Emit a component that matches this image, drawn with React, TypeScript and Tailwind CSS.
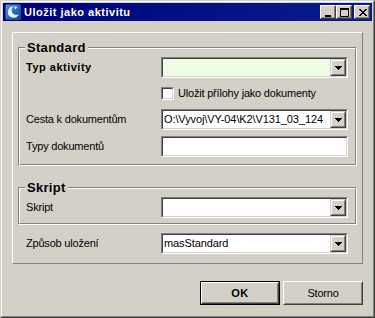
import React from "react";

function Arrow() {
  return (
    <svg width="7" height="4" viewBox="0 0 7 4" shapeRendering="crispEdges">
      <path d="M0 0h7v1h-7z M1 1h5v1h-5z M2 2h3v1h-3z M3 3h1v1h-1z" fill="#000" />
    </svg>
  );
}

function ArrowBtn() {
  return (
    <div className="w-[16px] h-full border border-t-[#d4d0c8] border-l-[#d4d0c8] border-r-[#404040] border-b-[#404040] bg-[#d4d0c8]">
      <div className="w-full h-full border border-t-white border-l-white border-r-[#808080] border-b-[#808080] flex items-center justify-center">
        <Arrow />
      </div>
    </div>
  );
}

function Sunken({ className, children }: { className: string; children?: React.ReactNode }) {
  return (
    <div className={`border border-t-[#808080] border-l-[#808080] border-r-white border-b-white ${className}`}>
      <div className="w-full h-full border border-t-[#404040] border-l-[#404040] border-r-[#d4d0c8] border-b-[#d4d0c8] flex">
        {children}
      </div>
    </div>
  );
}

function Combo({ value, bg }: { value?: string; bg: string }) {
  return (
    <Sunken className="h-[21px] w-[187px]">
      <div className={`flex-1 min-w-0 overflow-hidden whitespace-nowrap pl-[1px] text-[11px] leading-[17px] tracking-[-0.1px] ${bg}`}>
        {value}
      </div>
      <ArrowBtn />
    </Sunken>
  );
}

function Group({ title, className, children }: { title: string; className: string; children: React.ReactNode }) {
  return (
    <div className={`relative border border-t-[#808080] border-l-[#808080] border-r-white border-b-white ${className}`}>
      <div className="h-full border border-t-white border-l-white border-r-[#808080] border-b-[#808080]">
        {children}
      </div>
      <span className="absolute left-[6px] top-[-8px] bg-[#d4d0c8] px-[2px] font-bold text-[13px] leading-[15px] tracking-[0.3px] text-black">
        {title}
      </span>
    </div>
  );
}

function Row({ label, bold, children, className }: { label: string; bold?: boolean; children: React.ReactNode; className: string }) {
  return (
    <div className={`flex items-center h-[21px] ${className}`}>
      <div
        className={
          bold
            ? "w-[135px] shrink-0 text-[11px] leading-[21px] font-bold tracking-[0.5px]"
            : "w-[135px] shrink-0 text-[11px] leading-[21px] tracking-[-0.2px]"
        }
      >
        {label}
      </div>
      {children}
    </div>
  );
}

function TitleBtn({ children, className }: { children: React.ReactNode; className: string }) {
  return (
    <div className={`w-[16px] h-[14px] border border-t-white border-l-white border-r-[#404040] border-b-[#404040] bg-[#d4d0c8] ${className}`}>
      <div className="w-full h-full border border-t-[#d4d0c8] border-l-[#d4d0c8] border-r-[#808080] border-b-[#808080] relative">
        {children}
      </div>
    </div>
  );
}

function PushBtn({ label, def }: { label: string; def?: boolean }) {
  const inner = (
    <div className="w-full h-full border border-t-white border-l-white border-r-[#404040] border-b-[#404040]">
      <div className="w-full h-full border border-t-[#d4d0c8] border-l-[#d4d0c8] border-r-[#808080] border-b-[#808080] flex items-center justify-center">
        <span className={def ? "text-[11px] font-bold tracking-[0.5px]" : "text-[11px] tracking-[-0.2px]"}>{label}</span>
      </div>
    </div>
  );
  return def ? (
    <div className="w-[80px] h-[24px] border border-black">{inner}</div>
  ) : (
    <div className="w-[80px] h-[24px]">{inner}</div>
  );
}

export default function App() {
  return (
    <div className="w-[375px] h-[318px] bg-[#d4d0c8] border border-t-[#d4d0c8] border-l-[#d4d0c8] border-r-[#404040] border-b-[#404040] font-['Liberation_Sans',Arial,sans-serif] text-black">
      <div className="w-full h-full border border-t-white border-l-white border-r-[#808080] border-b-[#808080] p-[1px] flex flex-col">
        {/* title bar */}
        <div className="h-[18px] shrink-0 flex items-center bg-linear-to-r from-[#00007a] to-[#0a1c8c]">
          <svg width="16" height="16" viewBox="0 0 16 16" className="ml-[2px]">
            <defs>
              <linearGradient id="ig" x1="0" y1="0" x2="1" y2="1">
                <stop offset="0" stopColor="#5b9be0" />
                <stop offset="1" stopColor="#0d3f92" />
              </linearGradient>
            </defs>
            <rect x="0.5" y="0.5" width="15" height="15" rx="1" fill="url(#ig)" stroke="#1b4f9c" />
            <path d="M8.5 2.5 A5.6 5.6 0 1 0 13.8 10 A4.2 4.2 0 1 1 8.5 2.5 Z" fill="#e6f2ff" />
            <path d="M9 2 L12.5 3.2 L10 5.5 Z" fill="#e6f2ff" />
          </svg>
          <span className="ml-[3px] text-white font-bold text-[11px] tracking-[0.5px] leading-[18px]">Uložit jako aktivitu</span>
          <div className="flex-1" />
          <TitleBtn className="">
            <div className="absolute left-[3px] top-[8px] w-[6px] h-[2px] bg-black" />
          </TitleBtn>
          <TitleBtn className="">
            <div className="absolute left-[2px] top-[1px] w-[9px] h-[9px] border border-black border-t-2" />
          </TitleBtn>
          <TitleBtn className="ml-[2px] mr-[2px]">
            <svg width="8" height="7" viewBox="0 0 8 7" shapeRendering="crispEdges" className="absolute left-[3px] top-[2px]">
              <path
                d="M0 0h2v1h-2z M6 0h2v1h-2z M1 1h2v1h-2z M5 1h2v1h-2z M2 2h4v1h-4z M3 3h2v1h-2z M2 4h4v1h-4z M1 5h2v1h-2z M5 5h2v1h-2z M0 6h2v1h-2z M6 6h2v1h-2z"
                fill="#000"
              />
            </svg>
          </TitleBtn>
        </div>

        {/* body */}
        <div className="flex-1 flex flex-col px-[9px]">
          {/* main panel */}
          <div className="mt-[11px] h-[232px] border border-t-white border-l-white border-r-[#808080] border-b-[#808080] flex flex-col">
            <Group title="Standard" className="mt-[14px] ml-[5px] w-[339px] h-[119px] shrink-0">
              <div className="pl-[6px] pt-[8px] flex flex-col">
                <Row label="Typ aktivity" bold className="">
                  <Combo bg="bg-[#effde6]" />
                </Row>
                <div className="mt-[9px] h-[13px] flex items-center">
                  <div className="w-[135px] shrink-0" />
                  <Sunken className="w-[13px] h-[13px] bg-white">
                    <div className="flex-1 bg-white" />
                  </Sunken>
                  <span className="ml-[4px] text-[11px] leading-[13px] tracking-[-0.2px]">Uložit přílohy jako dokumenty</span>
                </div>
                <Row label="Cesta k dokumentům" className="mt-[9px]">
                  <Combo bg="bg-white" value="O:\Vyvoj\VY-04\K2\V131_03_124" />
                </Row>
                <Row label="Typy dokumentů" className="mt-[6px]">
                  <Sunken className="h-[21px] w-[187px]">
                    <div className="flex-1 bg-white" />
                  </Sunken>
                </Row>
              </div>
            </Group>

            <Group title="Skript" className="mt-[21px] ml-[5px] w-[339px] h-[38px] shrink-0">
              <div className="pl-[6px] pt-[8px] flex flex-col">
                <Row label="Skript" className="">
                  <Combo bg="bg-white" />
                </Row>
              </div>
            </Group>

            <Row label="Způsob uložení" className="mt-[8px] pl-[13px]">
              <Combo bg="bg-white" value="masStandard" />
            </Row>
          </div>

          {/* buttons */}
          <div className="mt-[17px] flex justify-end gap-[3px]">
            <PushBtn label="OK" def />
            <PushBtn label="Storno" />
          </div>
        </div>
      </div>
    </div>
  );
}
